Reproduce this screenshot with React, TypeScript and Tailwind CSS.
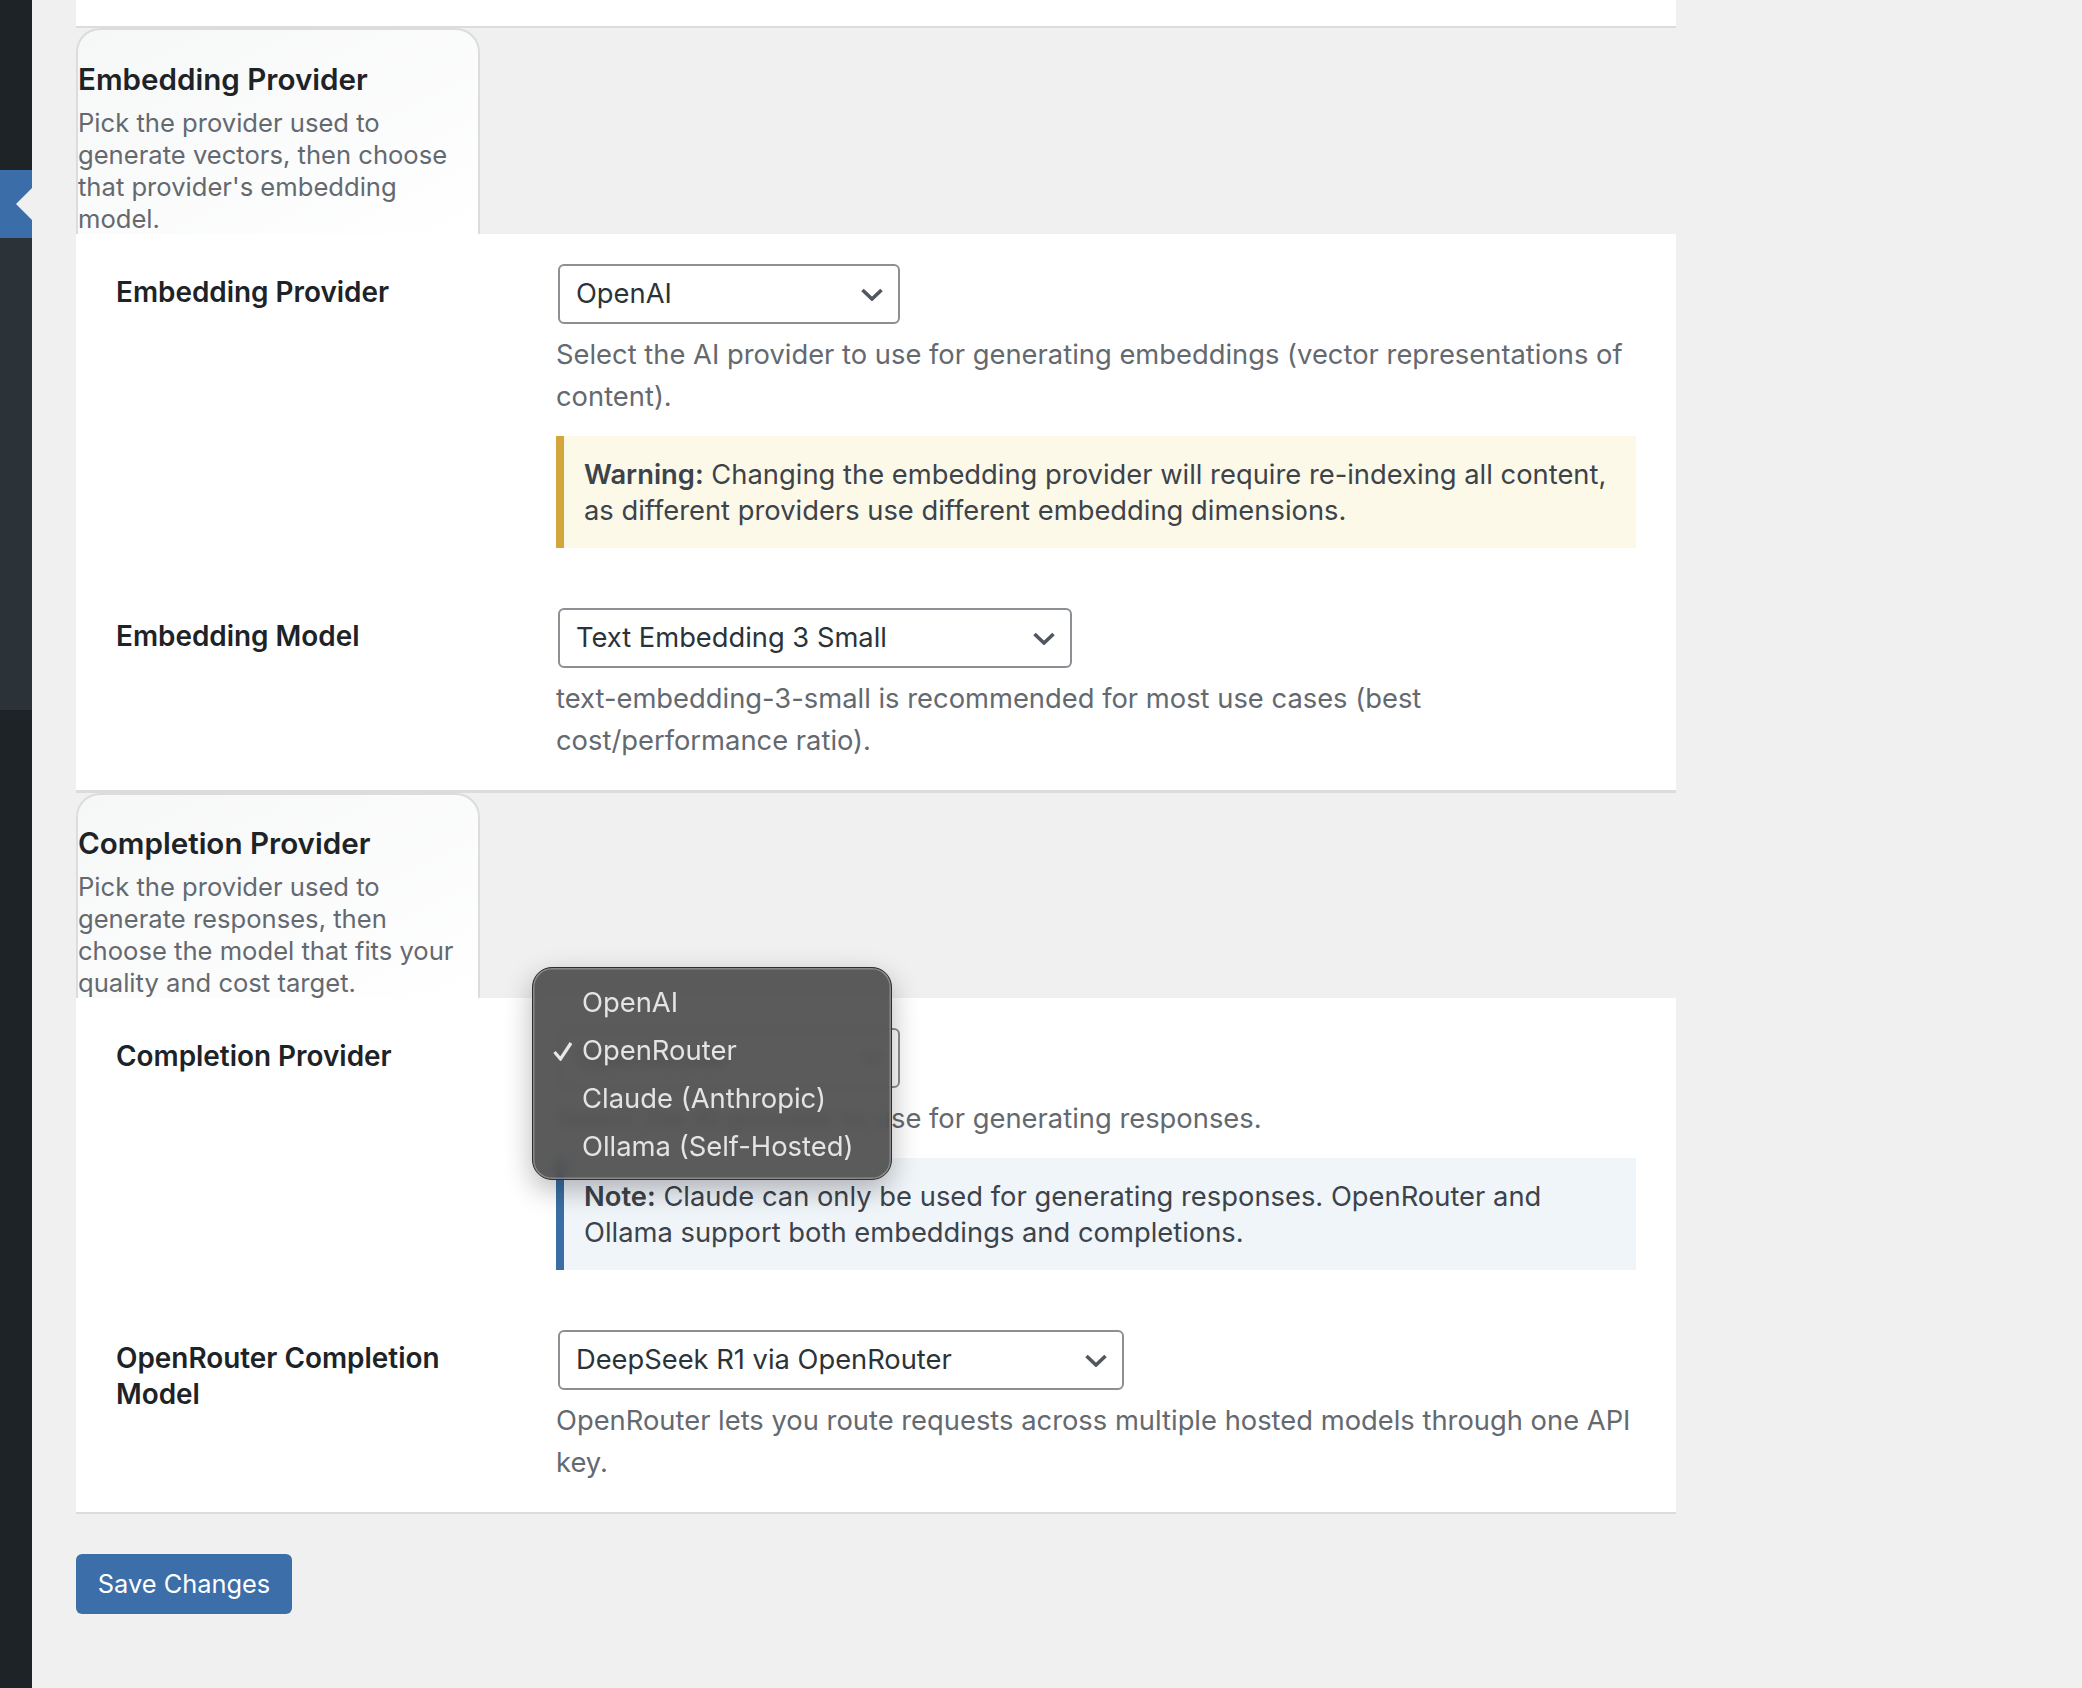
import type { ReactNode } from "react";

function Chevron() {
  return (
    <svg viewBox="0 0 22 13" className="w-[22px] h-[13px] shrink-0" fill="none" stroke="#50575e" strokeWidth="3.6">
      <path d="M1.5 2 11 11 20.5 2" />
    </svg>
  );
}

function FakeSelect({ value, width }: { value: string; width: string }) {
  return (
    <div className={`${width} h-[60px] ml-[2px] flex items-center justify-between pl-[16px] pr-[15px] bg-white border-2 border-[#8c8f94] rounded-[6px] text-[#2c3338] text-[27.3px]`}>
      <span>{value}</span>
      <Chevron />
    </div>
  );
}

function Description({ children }: { children: ReactNode }) {
  return <p className="mt-[10px] text-[#646970] text-[27.35px] leading-[42px]">{children}</p>;
}

function Notice({ border, bg, label, children }: { border: string; bg: string; label: string; children: ReactNode }) {
  return (
    <div className={`mt-[18px] ${border} ${bg} border-l-[8px] pt-[21px] pb-[19px] pl-[20px] pr-[20px] text-[#3c434a] text-[27.35px] leading-[36px]`}>
      <strong className="font-semibold">{label}</strong> {children}
    </div>
  );
}

function SectionTab({ title, box, children }: { title: string; box: string; children: ReactNode }) {
  return (
    <div className={`w-[404px] ${box} overflow-hidden border-2 border-b-0 border-[#dcdcde] rounded-t-[24px] bg-gradient-to-br from-[#f6f7f7] to-white`}>
      <h2 className="text-[#1d2327] text-[29.6px] leading-[36px] font-semibold">{title}</h2>
      <p className="mt-[10px] text-[#646970] text-[25.6px] leading-[32px]">{children}</p>
    </div>
  );
}

function Row({ label, last, children }: { label: string; last?: boolean; children: ReactNode }) {
  return (
    <div className={`grid grid-cols-[440px_1fr] pl-[40px] pr-[40px] pt-[30px] ${last ? "pb-[28px]" : "pb-[30px]"}`}>
      <div className="pt-[10px] pr-[60px] text-[#1d2327] text-[27.9px] leading-[36px] font-semibold">{label}</div>
      <div className="relative">{children}</div>
    </div>
  );
}

function SelectMenu() {
  const items = ["OpenAI", "OpenRouter", "Claude (Anthropic)", "Ollama (Self-Hosted)"];
  return (
    <div className="absolute left-[-24px] top-[-61px] w-[360px] h-[213px] pt-[11px] rounded-[20px] bg-[#4d4d4d]/92 backdrop-blur-[6px] border-[1.5px] border-[#2e2e2e] shadow-[inset_0_0_0_1.5px_rgba(255,255,255,0.28),0_10px_28px_rgba(0,0,0,0.28)]">
      {items.map((item) => (
        <div key={item} className="relative h-[48px] pl-[49px] flex items-center text-[#e4e4e4] text-[27.4px]">
          {item === "OpenRouter" && (
            <svg viewBox="0 0 20 20" className="absolute left-[20px] top-[14px] w-[20px] h-[20px]" fill="none" stroke="#e8e8e8" strokeWidth="3.2">
              <path d="M1.5 11 7.5 18 18 2" />
            </svg>
          )}
          {item}
        </div>
      ))}
    </div>
  );
}

export default function App() {
  return (
    <div className="flex h-[1688px] overflow-hidden bg-[#f0f0f1] font-['Inter',sans-serif]">
      {/* Admin menu strip */}
      <aside className="w-[32px] shrink-0 flex flex-col bg-[#1d2327]">
        <div className="h-[170px]" />
        <div className="h-[68px] flex items-center justify-end bg-[#3b6ea8]">
          <div className="w-0 h-0 border-y-[16px] border-r-[16px] border-y-transparent border-r-[#f0f0f1]" />
        </div>
        <div className="h-[472px] bg-[#2c3338]" />
      </aside>

      <main className="w-[1644px] shrink-0 ml-[44px]">
        <div className="w-[1600px]">
          <div className="h-[28px] bg-white border-b-2 border-[#dcdcde]" />

          <SectionTab title="Embedding Provider" box="h-[206px] pt-[31px]">
            Pick the provider used to generate vectors, then choose that provider's embedding model.
          </SectionTab>
          <section className="bg-white border-b-[3px] border-[#dcdcde]">
            <Row label="Embedding Provider">
              <FakeSelect value="OpenAI" width="w-[342px]" />
              <Description>Select the AI provider to use for generating embeddings (vector representations of content).</Description>
              <Notice border="border-[#d4a63e]" bg="bg-[#fcf9e8]" label="Warning:">
                Changing the embedding provider will require re-indexing all content, as different providers use different embedding dimensions.
              </Notice>
            </Row>
            <Row label="Embedding Model" last>
              <FakeSelect value="Text Embedding 3 Small" width="w-[514px]" />
              <Description>text-embedding-3-small is recommended for most use cases (best cost/performance ratio).</Description>
            </Row>
          </section>

          <SectionTab title="Completion Provider" box="h-[205px] pt-[30px]">
            Pick the provider used to generate responses, then choose the model that fits your quality and cost target.
          </SectionTab>
          <section className="bg-white border-b-2 border-[#dcdcde]">
            <Row label="Completion Provider">
              <FakeSelect value="OpenRouter" width="w-[342px]" />
              <Description>Select the AI provider to use for generating responses.</Description>
              <Notice border="border-[#3a6ea5]" bg="bg-[#f0f5fa]" label="Note:">
                Claude can only be used for generating responses. OpenRouter and Ollama support both embeddings and completions.
              </Notice>
              <SelectMenu />
            </Row>
            <Row label="OpenRouter Completion Model" last>
              <FakeSelect value="DeepSeek R1 via OpenRouter" width="w-[566px]" />
              <Description>OpenRouter lets you route requests across multiple hosted models through one API key.</Description>
            </Row>
          </section>

          <button className="mt-[40px] w-[216px] h-[60px] rounded-[6px] bg-[#3c6ea9] text-white text-[25.4px]">Save Changes</button>
        </div>
      </main>
    </div>
  );
}
